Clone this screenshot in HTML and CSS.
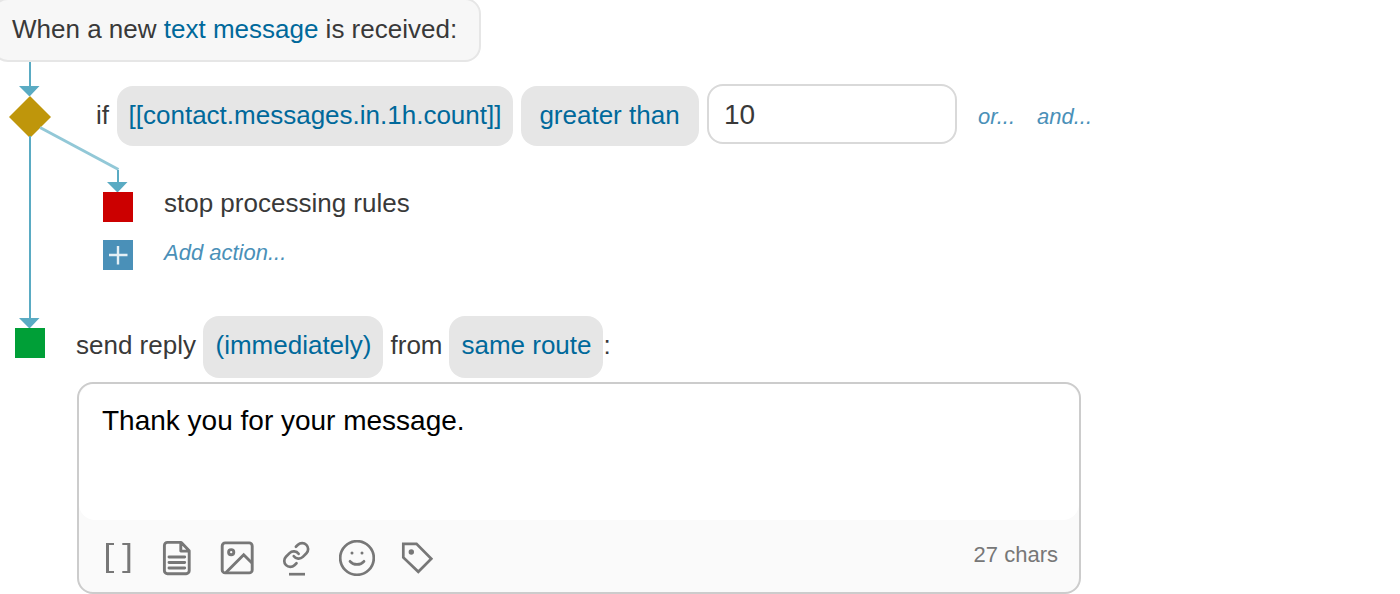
FILE: index.html
```html
<!DOCTYPE html>
<html lang="en">
<head>
    <meta charset="UTF-8">
    <meta name="viewport" content="width=device-width, initial-scale=1.0">
    <title>Auto-reply rule</title>
    <link rel="stylesheet" href="styles.css">
</head>
<body>
    <div class="flow">
        <!-- lines and arrows between the steps -->
        <svg class="connectors" width="140" height="330" viewBox="0 0 140 330">
            <path class="branch" d="M40 127.500L118.500 169.500" />
            <path class="line" d="M30 62V88M30 136V320M118 170V184" />
            <path class="arrow" d="M19 86H39.500L30 96H29zM107 182H127.500L118 192H117zM19 318H39.500L30 328H29z" />
        </svg>

        <div class="trigger">When a new <a class="link">text message</a> is received:</div>

        <div class="condition">
            <svg class="diamond" width="42" height="42" viewBox="0 0 42 42">
                <path d="M21 0L42 21L21 42L0 21z" />
            </svg>
            <span class="if">if</span>
            <span class="pill variable">[[contact.messages.in.1h.count]]</span>
            <span class="pill operator">greater than</span>
            <input class="value" type="text" value="10">
            <a class="add or">or...</a>
            <a class="add and">and...</a>
        </div>

        <div class="actions">
            <div class="action">
                <span class="square stop"></span>
                <span class="label">stop processing rules</span>
            </div>
            <div class="action">
                <svg class="square plus" width="30" height="30" viewBox="0 0 30 30">
                    <path d="M6 15H24.500M15 6V24.500" />
                </svg>
                <a class="label add">Add action...</a>
            </div>
        </div>

        <div class="reply">
            <span class="square send"></span>
            <span class="send-text">send reply</span>
            <span class="pill timing">(immediately)</span>
            <span class="from">from</span>
            <span class="pill route">same route</span>
            <span class="colon">:</span>
        </div>

        <div class="editor">
            <div class="message">Thank you for your message.</div>
            <div class="toolbar">
                <svg class="icon" viewBox="0 0 36 36">
                    <path d="M7 3H15V5H10V31H15V33H7zM23.300 3H31.300V33H23.300V31H28.300V5H23.300z" class="dot" />
                </svg>
                <svg class="icon" viewBox="0 0 36 36">
                    <path d="M22.300 2.400H8.400A3 3 0 0 0 5.400 5.400V30.700A3 3 0 0 0 8.400 33.700H27.200A3 3 0 0 0 30.200 30.700V10.700zM21.800 2.500V11.100H30M10 17H25.700M10 22.500H25.700M10 28H25.700" stroke-width="2.900" stroke-linecap="round" stroke-linejoin="round" />
                </svg>
                <svg class="icon" viewBox="0 0 36 36">
                    <rect x="3.200" y="2.900" width="30" height="30" rx="3" stroke-width="2.900" />
                    <circle cx="12.200" cy="12.200" r="2.600" stroke-width="2.900" />
                    <path d="M7 32.500L24.700 14.800L33 23" stroke-width="2.900" />
                </svg>
                <svg class="icon" viewBox="0 0 36 36">
                    <g transform="translate(2.800 .6) scale(1.200)" stroke-width="2.250" stroke-linecap="round">
                        <path d="M10 13a5 5 0 0 0 7.540.540l3-3a5 5 0 0 0-7.070-7.070l-1.720 1.710" />
                        <path d="M14 11a5 5 0 0 0-7.540-.540l-3 3a5 5 0 0 0 7.070 7.070l1.710-1.710" />
                    </g>
                    <path d="M10 34.200H26" />
                </svg>
                <svg class="icon" viewBox="0 0 36 36">
                    <circle cx="18" cy="18" r="16.800" />
                    <circle class="dot" cx="13" cy="13" r="1.500" />
                    <circle class="dot" cx="23" cy="13" r="1.500" />
                    <path d="M11 21.300C14.500 25.500 21.500 25.500 25 21.300" stroke-linecap="round" />
                </svg>
                <svg class="icon" viewBox="0 0 36 36">
                    <path d="M4.300 3.800H17.500L32.300 18.800L19.300 31.800L4.300 17.500z" />
                    <circle class="dot" cx="12.300" cy="12" r="2.700" />
                </svg>
                <span class="count">27 chars</span>
            </div>
        </div>
    </div>
</body>
</html>
```

FILE: styles.css
```css
* {
    box-sizing: border-box;
}
body {
    margin: 0;
    background-color: white;
    color: #393939;
    font-family: "Liberation Sans", Arial, sans-serif;
    font-size: 26px;
    line-height: 30px;
    overflow: hidden;
}
.flow {
    display: flow-root;
    position: relative;
    height: 594px;
    white-space: nowrap;
}
.connectors {
    position: absolute;
    left: 0;
    top: 0;
}
.line {
    stroke: #5aabc3;
    stroke-width: 2;
}
.branch {
    stroke: #92c8d7;
    stroke-width: 3;
}
.arrow {
    fill: #5aabc3;
}

.trigger {
    width: 489px;
    height: 64px;
    margin: -2px 0 0 -8px;
    padding: 13px 18px;
    line-height: 32px;
    border: 2px solid #e6e6e6;
    border-radius: 16px;
    background-color: #f7f7f7;
}
.link {
    color: #00699b;
}

.condition {
    display: flex;
    align-items: flex-start;
    margin-top: 22px;
    padding-left: 9px;
    height: 62px;
}
.diamond {
    margin-top: 12px;
    fill: #bf960b;
}
.if {
    width: 21px;
    margin: 16px 0 0 45px;
}
.pill {
    height: 60px;
    padding-top: 14px;
    border-radius: 16px;
    background-color: #e6e6e6;
    color: #00699b;
    text-align: center;
}
.condition .pill {
    margin-top: 2px;
}
.variable {
    width: 396px;
}
.operator {
    width: 178px;
    margin-left: 8px;
    padding-right: 1px;
}
.value {
    width: 250px;
    height: 60px;
    margin-left: 8px;
    padding: 2px 15px 0;
    border: 2px solid #d9d9d9;
    border-radius: 16px;
    color: #393939;
    font: 28px "Liberation Sans", Arial, sans-serif;
}
.add {
    color: #4a90b8;
    font-size: 22px;
    font-style: italic;
}
.or {
    width: 59px;
    margin: 18px 0 0 21px;
}
.and {
    margin-top: 18px;
}

.actions {
    display: flex;
    flex-direction: column;
    gap: 18px;
    margin-top: 46px;
    padding-left: 103px;
}
.action {
    display: flex;
    gap: 31px;
    height: 30px;
}
.label {
    margin-top: -4px;
}
.label.add {
    margin-top: -2px;
}
.square {
    width: 30px;
    height: 30px;
}
.stop {
    background-color: #c00;
}
.plus {
    background-color: #4a90b8;
    stroke: #e4eff5;
    stroke-width: 2.4;
}
.send {
    background-color: #009f37;
}

.reply {
    display: flex;
    margin-top: 46px;
    padding-left: 15px;
    height: 62px;
}
.reply .pill {
    height: 62px;
    padding-left: 1px;
}
.reply .square {
    margin-top: 12px;
}
.send-text {
    width: 127px;
    margin: 14px 0 0 31px;
}
.timing {
    width: 180px;
}
.from {
    width: 58.5px;
    margin: 14px 0 0 7.5px;
}
.route {
    width: 154px;
}
.colon {
    margin: 14px 0 0 0.5px;
}

.editor {
    width: 1004px;
    height: 212px;
    margin: 4px 0 0 77px;
    border: 2px solid #ccc;
    border-radius: 16px;
    background-color: #fafafa;
}
.message {
    height: 136px;
    padding: 21px 23px;
    border-radius: 16px;
    background-color: white;
    color: black;
    font-size: 28px;
    line-height: 32px;
}
.toolbar {
    display: flex;
    gap: 24px;
    padding: 20px 21px 0 20px;
}
.icon {
    width: 36px;
    height: 36px;
    fill: none;
    stroke: #777;
    stroke-width: 2.7;
}
.dot {
    fill: #777;
    stroke: none;
}
.count {
    margin-left: auto;
    color: #777;
    font-size: 22px;
}
```
